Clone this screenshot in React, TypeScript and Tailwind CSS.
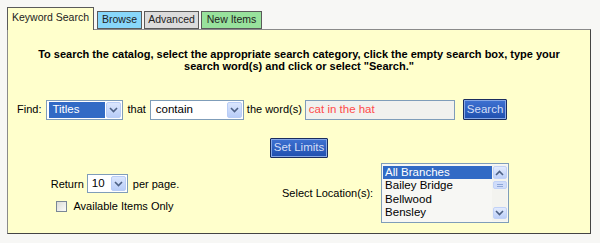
import React from "react";

const font = "font-['Arial','Liberation_Sans',sans-serif]";

function Chevron({ up }: { up?: boolean }) {
  return (
    <svg width="9" height="6" viewBox="0 0 9 6" className={up ? "rotate-180" : ""}>
      <path d="M1 1 L4.5 4.5 L8 1" fill="none" stroke="#4d6185" strokeWidth="1.6" />
    </svg>
  );
}

function DropButton() {
  return (
    <div className="flex h-full w-[15px] items-center justify-center rounded-[2px] border border-[#b9cdf6] bg-gradient-to-b from-[#dbe6fd] to-[#b8cdf8]">
      <Chevron />
    </div>
  );
}

function Select({ value, w, selected }: { value: string; w: string; selected?: boolean }) {
  return (
    <div className={`flex h-[20px] items-stretch border border-[#7f9db9] bg-white p-px ${w}`}>
      <div className="flex flex-1 items-center pl-px">
        <span
          className={`flex h-full flex-1 items-center pl-[3px] text-[11.5px] ${
            selected ? "mr-px bg-[#316ac5] text-white" : "text-black"
          }`}
        >
          {value}
        </span>
      </div>
      <DropButton />
    </div>
  );
}

function BlueButton({ label, h }: { label: string; h: string }) {
  return (
    <button
      className={`${h} rounded-[1px] border border-[#1b2d5e] bg-gradient-to-b from-[#3f72d2] to-[#1f4fae] px-[3px] text-[11.5px] leading-none text-[#d3def7] shadow-[inset_0_0_0_1px_#86a8e6]`}
    >
      {label}
    </button>
  );
}

function Tab({ label, cls, active }: { label: string; cls: string; active?: boolean }) {
  return (
    <div
      className={`flex items-center border border-[#5a5a5a] text-[10.5px] text-[#222] ${cls} ${
        active ? "relative z-10 mb-[-1px] h-[23px] border-b-0 pb-[2px]" : "h-[18px]"
      }`}
    >
      {label}
    </div>
  );
}

function LocationList() {
  const items = ["All Branches", "Bailey Bridge", "Bellwood", "Bensley"];
  return (
    <div className="flex h-[60px] w-[128px] border border-[#7f9db9] bg-[#f7f7f4] p-px">
      <div className="flex-1 overflow-hidden pt-px text-[11.5px] leading-[13.3px]">
        {items.map((it, i) => (
          <div key={it} className={`pl-[2px] ${i === 0 ? "bg-[#316ac5] text-white" : "text-black"}`}>
            {it}
          </div>
        ))}
      </div>
      <div className="flex w-[15px] flex-col items-center bg-[#f3f3ef] pt-px">
        <div className="flex h-[13px] w-[14px] items-center justify-center rounded-[2px] border border-[#c1d2f7] bg-gradient-to-b from-[#e3ebfd] to-[#bccff8]">
          <Chevron up />
        </div>
        <div className="mt-[2px] flex h-[8px] w-[14px] flex-col items-center justify-center gap-px rounded-[2px] border border-[#c1d2f7] bg-[#cfdcfa]">
          <div className="h-px w-[6px] bg-[#8ea7d8]" />
          <div className="h-px w-[6px] bg-[#8ea7d8]" />
        </div>
        <div className="flex-1" />
        <div className="mb-[2px] flex h-[12px] w-[14px] items-center justify-center rounded-[2px] border border-[#c1d2f7] bg-gradient-to-b from-[#e3ebfd] to-[#bccff8]">
          <Chevron />
        </div>
      </div>
    </div>
  );
}

export default function App() {
  return (
    <div className={`h-[243px] w-[600px] bg-[#f7f7f5] pl-[7px] pt-[7px] ${font}`}>
      <div className="flex h-[22px] items-end">
        <Tab label="Keyword Search" cls="w-[87px] justify-center bg-[#ffffcc]" active />
        <Tab label="Browse" cls="ml-[3px] w-[45px] justify-center bg-[#88d7fa]" />
        <Tab label="Advanced" cls="ml-[2px] w-[55px] justify-center bg-[#dcdcdc]" />
        <Tab label="New Items" cls="ml-[2px] w-[61px] justify-center bg-[#98e29c]" />
      </div>

      <div className="flex h-[205px] w-[584px] flex-col border border-b-[#444] border-l-[#8a8a8a] border-r-[#444] border-t-[#8a8a8a] bg-[#ffffcc]">
        <p className="pt-[18px] text-center text-[11px] font-bold leading-[12px] text-black">
          To search the catalog, select the appropriate search category, click the empty search box, type your
          <br />
          search word(s) and click or select "Search."
        </p>

        <div className="mt-[27px] flex items-center pl-[9px] text-[11px] text-black">
          <span>Find:</span>
          <div className="ml-[5px]">
            <Select value="Titles" w="w-[77px]" selected />
          </div>
          <span className="ml-[4px]">that</span>
          <div className="ml-[4px]">
            <Select value="contain" w="w-[94px]" />
          </div>
          <span className="ml-[3px]">the word(s)</span>
          <div className="ml-[3px] flex h-[20px] w-[150px] items-center border border-[#7f9db9] bg-[#f1f1ee] pl-[3px] text-[11.5px] text-[#ff4a4a]">
            cat in the hat
          </div>
          <div className="ml-[8px]">
            <BlueButton label="Search" h="h-[21px]" />
          </div>
        </div>

        <div className="mt-[18px] flex justify-center">
          <BlueButton label="Set Limits" h="h-[20px]" />
        </div>

        <div className="mt-[5px] flex items-center text-[11px] text-black">
          <div className="flex w-[214px] flex-col items-center gap-[5px] pt-[3px]">
            <div className="flex items-center">
              <span>Return</span>
              <div className="ml-[3px] flex h-[19px] w-[41px] items-stretch border border-[#7f9db9] bg-white p-px">
                <span className="flex flex-1 items-center pl-[3px] text-[11.5px]">10</span>
                <DropButton />
              </div>
              <span className="ml-[5px]">per page.</span>
            </div>
            <div className="flex items-center">
              <div className="h-[11px] w-[11px] border border-[#7a8796] bg-gradient-to-br from-[#dcdcd7] to-[#fbfbf9]" />
              <span className="ml-[6px]">Available Items Only</span>
            </div>
          </div>
          <span className="ml-[60px]">Select Location(s):</span>
          <div className="ml-[8px]">
            <LocationList />
          </div>
        </div>
      </div>
    </div>
  );
}
